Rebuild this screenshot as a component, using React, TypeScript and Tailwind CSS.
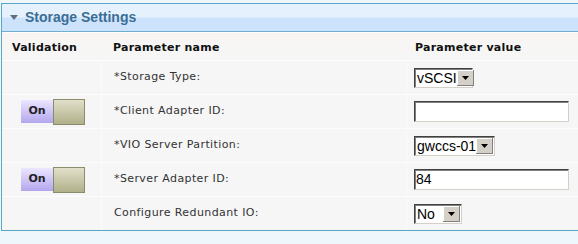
import React from 'react';

interface Row {
  label: string;
  toggle?: boolean;
  kind: 'select' | 'input';
  value: string;
  width: string;
}

const rows: Row[] = [
  { label: '*Storage Type:', kind: 'select', value: 'vSCSI', width: 'w-[59px]' },
  { label: '*Client Adapter ID:', toggle: true, kind: 'input', value: '', width: 'w-[155px]' },
  { label: '*VIO Server Partition:', kind: 'select', value: 'gwccs-01', width: 'w-[81px]' },
  { label: '*Server Adapter ID:', toggle: true, kind: 'input', value: '84', width: 'w-[155px]' },
  { label: 'Configure Redundant IO:', kind: 'select', value: 'No', width: 'w-[48px]' },
];

const Toggle = () => (
  <div className="flex h-[26px] items-center">
    <div className="flex h-[23px] w-[32px] items-center justify-center bg-gradient-to-b from-[#ece6ff] to-[#b4a6ee] text-[11px] font-bold text-[#222]">
      On
    </div>
    <div className="h-[26px] w-[32px] border border-[#8c8c6c] bg-gradient-to-b from-[#e2e0ca] to-[#b0b08a]" />
  </div>
);

const Arrow = () => (
  <div className="flex h-full w-[17px] shrink-0 items-center justify-center bg-[#d4d0c8] shadow-[inset_-1px_-1px_0_#808080,inset_1px_1px_0_#fff]">
    <svg width="7" height="4" viewBox="0 0 7 4">
      <path d="M0 0h7L3.5 4z" fill="#000" />
    </svg>
  </div>
);

const Field = ({ row }: { row: Row }) => {
  if (row.kind === 'select') {
    return (
      <div className={`flex h-[20px] ${row.width} items-stretch border border-t-[#404040] border-l-[#404040] border-b-[#d4d0c8] border-r-[#d4d0c8] bg-white p-[1px] font-['Liberation_Sans',sans-serif] shadow-[inset_1px_1px_0_#808080]`}>
        <span className="flex-1 whitespace-nowrap pl-[1px] text-[14px] leading-[16px] text-black">{row.value}</span>
        <Arrow />
      </div>
    );
  }
  return (
    <div className={`h-[21px] ${row.width} border border-t-[#404040] border-l-[#404040] border-b-[#d4d0c8] border-r-[#d4d0c8] bg-white pl-[1px] font-['Liberation_Sans',sans-serif] text-[14px] leading-[18px] text-black shadow-[inset_1px_1px_0_#808080]`}>
      {row.value}
    </div>
  );
};

export default function App() {
  return (
    <div className="h-[244px] w-[578px] overflow-hidden bg-[#eef8fc] pt-[3px] font-['DejaVu_Sans',sans-serif]">
      <div className="ml-[1px] border-l border-b border-[#5aa5c5] bg-[#f6f6f6]">
        {/* title bar */}
        <div className="border-t border-[#5aa5c5]">
          <div className="flex h-[27px] items-center bg-[linear-gradient(#e5f2fd_0,#e5f2fd_48%,#cde3fb_52%,#cde3fb_100%)] pl-[8px]">
            <svg width="8" height="5" viewBox="0 0 8 5" className="mr-[7px]">
              <path d="M0 0h8L4 5z" fill="#5c6f80" />
            </svg>
            <span className="font-['Liberation_Sans',sans-serif] text-[14px] font-bold text-[#3b6e96]">Storage Settings</span>
          </div>
          <div className="h-[1px] bg-[#6fb0d2]" />
          <div className="h-[1px] bg-white" />
        </div>

        {/* column titles */}
        <div className="grid h-[27px] grid-cols-[99px_305px_1fr] items-center bg-[linear-gradient(#fbf3ee_0,#f8f6f4_12%,#f6f6f6_100%)] pt-[4px] text-[11px] font-bold tracking-[0.25px] text-[#111]">
          <span className="pl-[10px]">Validation</span>
          <span className="pl-[12px]">Parameter name</span>
          <span className="pl-[9px]">Parameter value</span>
        </div>

        {rows.map((row, i) => (
          <div
            key={i}
            className="grid h-[34px] grid-cols-[99px_305px_1fr] border-t border-[#fdfdfd] text-[11px] text-[#333]"
          >
            <div className="flex items-center pl-[19px]">{row.toggle && <Toggle />}</div>
            <div className="flex items-center border-l border-[#fbfbfb] pl-[12px] tracking-[0.4px]">{row.label}</div>
            <div className="flex items-center border-l border-[#fbfbfb] pl-[7px]">
              <Field row={row} />
            </div>
          </div>
        ))}
      </div>
    </div>
  );
}
